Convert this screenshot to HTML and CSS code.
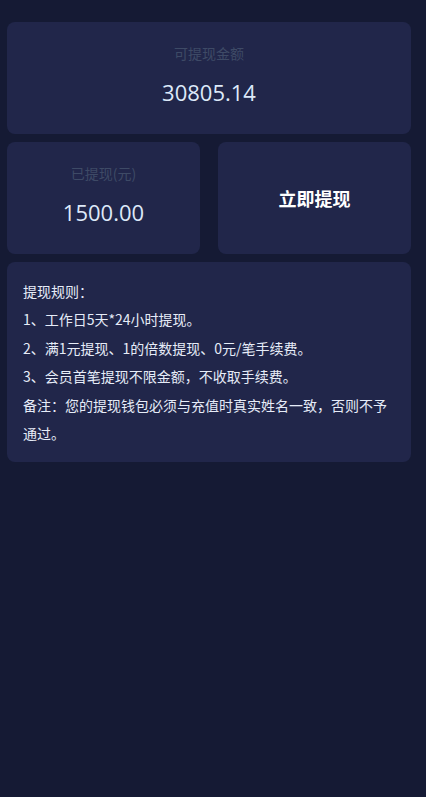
FILE: index.html
```html
<!DOCTYPE html>
<html lang="zh-CN">
<head>
<meta charset="utf-8">
<title>提现</title>
<link rel="stylesheet" href="styles.css">
</head>
<body>
<div class="page">
  <div class="card stat">
    <div class="label">可提现金额</div>
    <div class="value">30805.14</div>
  </div>
  <div class="row">
    <div class="card stat">
      <div class="label">已提现(元)</div>
      <div class="value">1500.00</div>
    </div>
    <div class="card action">立即提现</div>
  </div>
  <div class="card rules">
    <p>提现规则：</p>
    <p>1、工作日5天*24小时提现。</p>
    <p>2、满1元提现、1的倍数提现、0元/笔手续费。</p>
    <p>3、会员首笔提现不限金额，不收取手续费。</p>
    <p>备注：您的提现钱包必须与充值时真实姓名一致，否则不予通过。</p>
  </div>
</div>
</body>
</html>
```
FILE: styles.css
```css
html, body {
  margin: 0;
  padding: 0;
  background: #151a34;
  font-family: "Noto Sans CJK SC", "Noto Sans", sans-serif;
}
.page {
  padding: 22px 15px 0 7px;
  display: flex;
  flex-direction: column;
  gap: 8px;
}
.card {
  background: #21264a;
  border-radius: 8px;
}
.stat {
  height: 112px;
  box-sizing: border-box;
  padding-top: 21px;
  display: flex;
  flex-direction: column;
  align-items: center;
}
.label {
  font-size: 14px;
  line-height: 20px;
  color: #3e4a66;
}
.value {
  margin-top: 14px;
  font-size: 22px;
  line-height: 30px;
  color: #dde9f9;
  font-family: "Open Sans", "Noto Sans", sans-serif;
}
.row {
  display: grid;
  grid-template-columns: 1fr 1fr;
  gap: 18px;
}
.action {
  height: 112px;
  display: flex;
  align-items: center;
  justify-content: center;
  font-size: 18px;
  font-weight: 700;
  color: #ffffff;
}
.rules {
  padding: 15px 16px 15px 16px;
  color: #e6ecf8;
  font-size: 14px;
  line-height: 28.4px;
}
.rules p {
  margin: 0;
}
```
